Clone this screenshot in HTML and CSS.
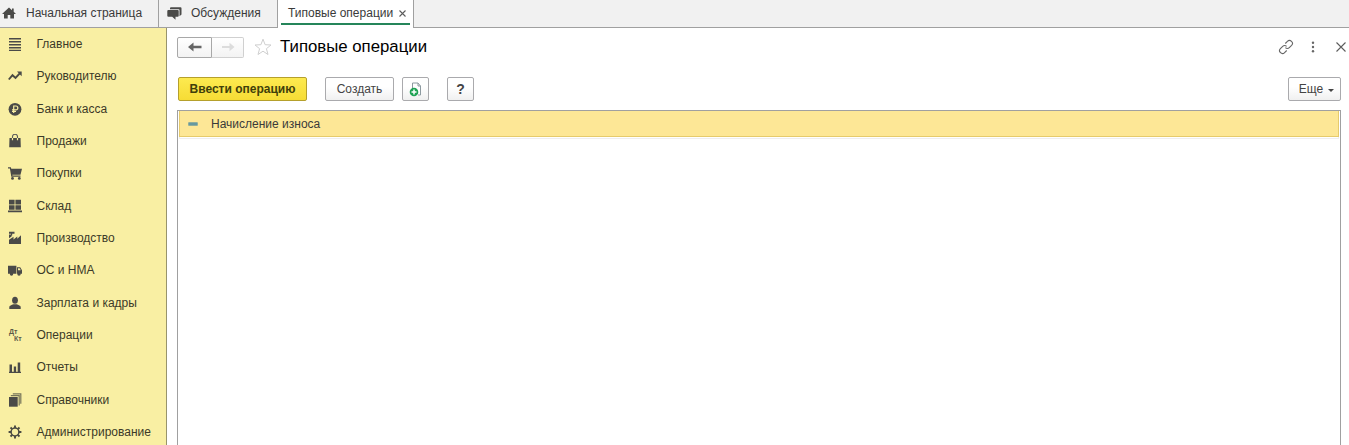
FILE: index.html
```
<!DOCTYPE html>
<html lang="ru">
<head>
    <meta charset="UTF-8">
    <meta name="viewport" content="width=device-width, initial-scale=1.0">
    <title>Типовые операции</title>
    <link rel="stylesheet" href="styles.css">
</head>
<body>
    <nav class="tabs">
        <div class="tab tab-home">
            <svg width="14" height="12" viewBox="0 0 14 12"><path d="M7 .5L0 7h2v4.500h3.700V8h2.600v3.500H12V7h2l-2.300-2.200V1.500H10v1.700z"/></svg>
            <span>Начальная страница</span>
        </div>
        <div class="tab tab-talk">
            <svg width="15" height="13" viewBox="0 0 15 13"><path d="M4 0.3h9.5a1 1 0 0 1 1 1V7.500l-2 1.800V3a.8.8 0 0 0-.8-.8H3V1.300a1 1 0 0 1 1-1z"/><path d="M1.300 3h9.400a1 1 0 0 1 1 1v4.700a1 1 0 0 1-1 1H8.500v3.100L5.200 9.700H1.300a1 1 0 0 1-1-1V4a1 1 0 0 1 1-1z"/></svg>
            <span>Обсуждения</span>
        </div>
        <div class="tab tab-active">
            <span>Типовые операции</span>
            <svg width="7" height="7" viewBox="0 0 7 7"><path class="line" d="M.5 .5l6 6M6.500 .5l-6 6"/></svg>
        </div>
    </nav>

    <div class="layout">
        <aside class="menu">
            <a class="item"><svg width="14" height="14" viewBox="0 0 14 14"><path d="M1 1h12v1.500H1zM1 4h12v1.500H1zM1 7h12v1.500H1zM1 10h12v1.500H1zM1 12.700h12V14H1z"/></svg><span>Главное</span></a>
            <a class="item"><svg width="14" height="14" viewBox="0 0 14 14"><path class="thick" d="M.8 10.500L4.500 6.200l3 2.700L12 4.100"/><path d="M9 2.500h4.700v4.700z"/></svg><span>Руководителю</span></a>
            <a class="item"><svg width="14" height="14" viewBox="0 0 14 14"><circle cx="7" cy="7.300" r="6.400"/><path class="rub" d="M5.700 11V4h2.200a1.900 1.900 0 0 1 0 3.900H4M4 9.500h4"/></svg><span>Банк и касса</span></a>
            <a class="item"><svg width="14" height="14" viewBox="0 0 14 14"><path d="M1.500 4h11l.3 9.300H1.200z"/><path class="line" d="M4.500 4V2.600a2.500 2.300 0 0 1 5 0V4"/><path class="rub" d="M4.500 4v2.200M9.500 4v2.200"/></svg><span>Продажи</span></a>
            <a class="item"><svg width="14" height="14" viewBox="0 0 14 14"><path d="M0 1.300h2.800l.5 1.400h10.700L12.500 8.700H4.300l.2 .8h8v1.300H3.300L1.900 2.600H0z"/><circle cx="4.500" cy="12.400" r="1.400"/><circle cx="11.300" cy="12.400" r="1.400"/></svg><span>Покупки</span></a>
            <a class="item"><svg width="14" height="14" viewBox="0 0 14 14"><path d="M1 .8h5.600v4.600H1zM7.400 .8H13v4.600H7.400zM1 6.200h5.600v4.500H1zM7.400 6.200H13v4.500H7.400zM0 11.500h14v1.700H0z"/></svg><span>Склад</span></a>
            <a class="item"><svg width="14" height="14" viewBox="0 0 14 14"><path d="M1 13V8.800l4.500-3v2.700l3.800-3v2.300L13 4.300V13zM1 7.300V3.500h2.500V5.600zM1 .8h5.500v2H4.200V4.500H3V2.800H1z"/></svg><span>Производство</span></a>
            <a class="item"><svg width="14" height="14" viewBox="0 0 14 14"><path fill-rule="evenodd" d="M0 2.800h8.400v8H0zM9 4.200h3.200L14 7.200v3.600H9zM10 5.200v2h2.800l-1.200-2z"/><circle cx="3.500" cy="11" r="1.700"/><circle cx="11" cy="11" r="1.700"/></svg><span>ОС и НМА</span></a>
            <a class="item"><svg width="14" height="14" viewBox="0 0 14 14"><ellipse cx="7" cy="4.200" rx="2.900" ry="3.500"/><path d="M1.300 13v-2c0-1.500 2.400-2 4-2.800h3.400c1.600.8 4 1.300 4 2.800v2z"/></svg><span>Зарплата и кадры</span></a>
            <a class="item"><span class="dtkt"><b>Дт</b><b>Кт</b></span><span>Операции</span></a>
            <a class="item"><svg width="14" height="14" viewBox="0 0 14 14"><path d="M1.500 4.500H4V12H1.500zM5.800 6.500h2.300V12H5.800zM9.700 2.500h2.500V12H9.700zM1 11.700h12V13H1z"/></svg><span>Отчеты</span></a>
            <a class="item"><svg width="14" height="14" viewBox="0 0 14 14"><path d="M1 4h8.700v9.700H1z"/><path class="pages" d="M2.800 2.600h8.400v9.800M4.800 .9h8v9.800"/></svg><span>Справочники</span></a>
            <a class="item"><svg width="14" height="14" viewBox="0 0 14 14"><circle class="gear" cx="7" cy="7" r="3.900"/><path class="thick" d="M7 .6v2.400M7 11v2.400M.6 7H3M11 7h2.400M2.500 2.500l1.700 1.700M9.800 9.800l1.700 1.700M11.500 2.500L9.800 4.200M4.200 9.800l-1.700 1.700"/></svg><span>Администрирование</span></a>
        </aside>

        <main class="content">
            <header class="head">
                <div class="nav-buttons">
                    <button class="back"><svg width="14" height="10" viewBox="0 0 14 10"><path d="M0 5L5.500 .5v3.200H13.500v2.600H5.500v3.200z"/></svg></button>
                    <button class="forward"><svg width="14" height="10" viewBox="0 0 14 10"><path d="M13.500 5L8.500 .8v3.200H1v2h7.500v3.200z"/></svg></button>
                </div>
                <svg class="star" width="18" height="18" viewBox="0 0 18 18"><path d="M9 1.200l2.100 5.500 5.900.3-4.600 3.700 1.600 5.800L9 13.200l-5 3.300 1.600-5.800L1 7l5.900-.3z"/></svg>
                <h1>Типовые операции</h1>
                <div class="window-icons">
                    <svg width="16" height="16" viewBox="0 0 16 16"><path class="link" d="M7.300 4.500l2.100-2.100a2.700 2.700 0 0 1 4.200 4L11.300 8.700a2.700 2.700 0 0 1-3.900 0M8.700 11.500l-2.100 2.100a2.700 2.700 0 0 1-4.200-4L4.700 7.300a2.700 2.700 0 0 1 3.900 0"/></svg>
                    <svg width="4" height="12" viewBox="0 0 4 12"><circle cx="2" cy="1.700" r="1.200"/><circle cx="2" cy="6" r="1.200"/><circle cx="2" cy="10.300" r="1.200"/></svg>
                    <svg width="10" height="10" viewBox="0 0 10 10"><path class="line" d="M.5 .5l9 9M9.500 .5l-9 9"/></svg>
                </div>
            </header>

            <div class="toolbar">
                <button class="btn primary">Ввести операцию</button>
                <button class="btn create">Создать</button>
                <button class="btn square copy"><svg width="14" height="15" viewBox="0 0 14 15"><path class="page" d="M3.500 7V1H9l2.500 3V13H9M9 1v3h2.500"/><circle class="plus-bg" cx="5" cy="10" r="4.300"/><path class="plus" d="M5 7.500v5M2.500 10h5"/></svg></button>
                <button class="btn square help">?</button>
                <button class="btn more">Еще <i class="caret"></i></button>
            </div>

            <div class="list">
                <div class="row"><i class="dash"></i><span>Начисление износа</span></div>
            </div>
        </main>
    </div>
</body>
</html>
```
FILE: styles.css
```
* { box-sizing: border-box; }

body {
    margin: 0;
    height: 445px;
    overflow: hidden;
    display: flex;
    flex-direction: column;
    background: #fff;
    color: #3a3a3a;
    font-family: "Liberation Sans", Arial, sans-serif;
    font-size: 12px;
}

svg { display: block; flex: none; fill: #4a4a48; }
.line { fill: none; stroke: #5c5c5c; stroke-width: 1.1; }
.thick { fill: none; stroke: #4a4a42; stroke-width: 1.9; }

/* tabs */
.tabs {
    display: flex;
    flex: none;
    height: 28px;
    background: #f1f1f1;
    border-bottom: 1px solid #a0a0a0;
}
.tab {
    display: flex;
    align-items: center;
    height: 27px;
    padding-bottom: 1px;
    border-right: 1px solid #a0a0a0;
}
.tab-home { width: 159px; padding-left: 2px; gap: 10px; }
.tab-talk { width: 119px; padding-left: 8px; gap: 9px; }
.tab-active {
    width: 136px;
    height: 28px;
    padding: 0 0 2px 10px;
    gap: 6px;
    background: linear-gradient(#25855a, #25855a) 3px 23px / 129px 2px no-repeat #fff;
}

.layout { display: flex; flex: 1; min-height: 0; }

/* left menu */
.menu {
    flex: none;
    width: 167px;
    background: #f9efa3;
    border-right: 1px solid #98946c;
}
.item {
    display: flex;
    align-items: center;
    gap: 14.5px;
    height: 32.35px;
    padding-left: 8px;
    padding-bottom: 0.6px;
    color: #3c3a28;
}
.rub { fill: none; stroke: #f9efa3; stroke-width: 1.2; }
.gear { fill: none; stroke: #4a4a42; stroke-width: 1.5; }
.pages { fill: none; stroke: #77755a; stroke-width: 1.2; }
.dtkt { width: 14px; font-size: 7px; line-height: 7px; color: #5c5a48; }
.dtkt b { display: block; padding-left: 1px; }
.dtkt b + b { padding-left: 6px; }

/* right side */
.content {
    flex: 1;
    min-width: 0;
    display: flex;
    flex-direction: column;
    padding: 8px 0 0 10px;
}
.head { display: flex; align-items: center; height: 22px; }
.nav-buttons { display: flex; }
.nav-buttons button {
    display: flex;
    align-items: center;
    justify-content: center;
    height: 21px;
    padding: 0;
    background: linear-gradient(#fff, #f3f3f3);
    border: 1px solid #a8a8a8;
}
.back { width: 35px; border-radius: 2px 0 0 2px; }
.nav-buttons .forward { width: 32px; border-color: #d0d0d0; border-left: 0; border-radius: 0 2px 2px 0; }
.back svg { fill: #666; }
.forward svg { fill: #dcdcdc; }
.star { margin-left: 10px; fill: none; stroke: #cfcfcf; }
h1 {
    margin: 0 0 0 8px;
    font-size: 16.8px;
    line-height: 20px;
    font-weight: normal;
    color: #000;
}
.window-icons { display: flex; align-items: center; gap: 22px; margin-left: auto; margin-right: 3px; }
.window-icons svg:nth-child(1) { margin-right: -5px; }
.window-icons svg:nth-child(2) { margin-right: -1px; }
.window-icons circle { fill: #666; }
.link { fill: none; stroke: #666; stroke-width: 1.1; }

.toolbar { display: flex; height: 25px; margin-top: 18px; padding: 1px 8px 0 1px; }
.btn {
    display: flex;
    align-items: center;
    justify-content: center;
    height: 24px;
    padding: 0;
    font: 12px "Liberation Sans", Arial, sans-serif;
    color: #444;
    background: linear-gradient(#fff 40%, #f0f0f0);
    border: 1px solid #aaaaad;
    border-radius: 2px;
}
.primary {
    width: 129px;
    font-weight: bold;
    color: #40400a;
    background: linear-gradient(#fdea50, #f6dc35);
    border-color: #b5a02c;
}
.create { width: 69px; margin-left: 18px; }
.square { width: 27px; }
.copy { margin-left: 8px; }
.help { margin-left: 18px; font-size: 14px; font-weight: bold; }
.more { width: 53px; margin-left: auto; padding-left: 4px; gap: 5px; }
.caret { border: 3px solid transparent; border-top-color: #444; border-bottom: 0; margin-top: 2px; }
.page { fill: #fff; stroke: #8d9aa0; }
.plus-bg { fill: #1fa354; }
.plus { stroke: #fff; stroke-width: 1.5; }

/* list */
.list {
    flex: 1;
    margin: 9px 8px 0 0;
    border: 1px solid #a0a0a0;
    border-bottom: 0;
}
.row {
    display: flex;
    align-items: center;
    height: 26px;
    margin: 0 1px;
    padding-left: 8px;
    gap: 13px;
    background: #fde796;
    border: 1px solid #e6cb6c;
    border-top: 0;
    box-shadow: 0 2px 0 -1px #fff, 0 2px 0 #eee;
}
.dash { width: 10px; height: 4px; background: #6699a0; border: 1px solid #8fae9c; border-radius: 1px; }
```
